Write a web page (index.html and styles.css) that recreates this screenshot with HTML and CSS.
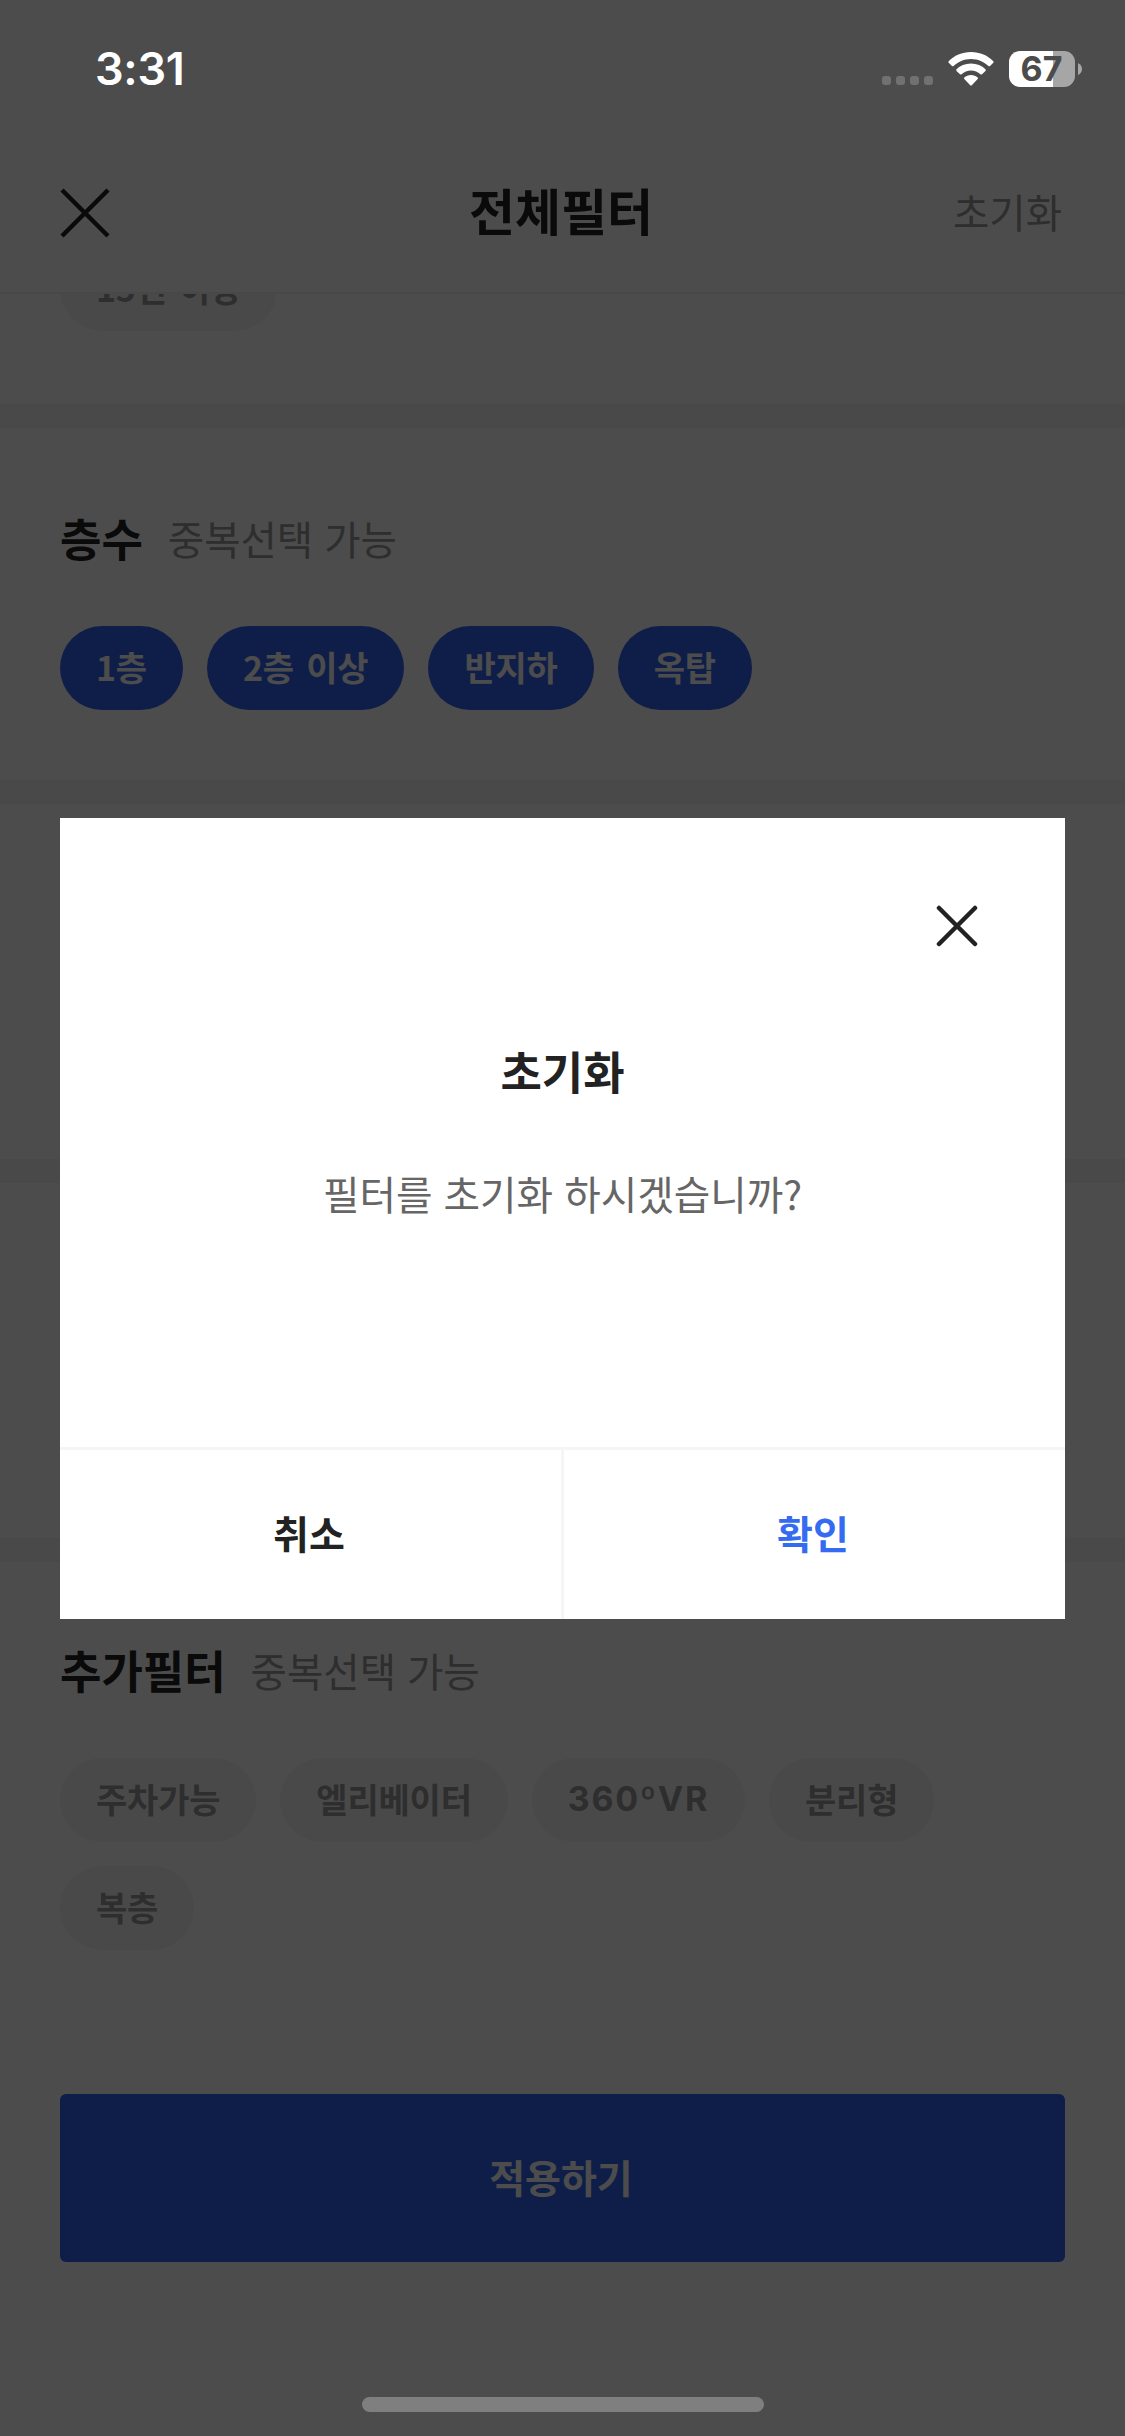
FILE: index.html
```html
<!DOCTYPE html>
<html lang="ko">
<head>
<meta charset="utf-8">
<title>전체필터</title>
<link rel="stylesheet" href="styles.css">
</head>
<body>
<div class="screen">
  <div class="page">
    <header class="header">
      <svg class="header-close" viewBox="0 0 50 50"><path d="M2 2L48 48M48 2L2 48"/></svg>
      <h1 class="header-title">전체필터</h1>
      <span class="header-reset">초기화</span>
    </header>
    <main class="sections">
      <section class="section section-age">
        <div class="chips"><span class="chip">15년 이상</span></div>
      </section>
      <section class="section section-floor">
        <h2 class="section-title">층수 <small class="hint">중복선택 가능</small></h2>
        <div class="chips">
          <span class="chip chip-on">1층</span>
          <span class="chip chip-on">2층 이상</span>
          <span class="chip chip-on">반지하</span>
          <span class="chip chip-on">옥탑</span>
        </div>
      </section>
      <section class="section section-covered"></section>
      <section class="section section-covered"></section>
      <section class="section section-extra">
        <h2 class="section-title">추가필터 <small class="hint">중복선택 가능</small></h2>
        <div class="chips">
          <span class="chip">주차가능</span>
          <span class="chip">엘리베이터</span>
          <span class="chip chip-latin">360ºVR</span>
          <span class="chip">분리형</span>
          <span class="chip">복층</span>
        </div>
      </section>
    </main>
    <button class="apply">적용하기</button>
  </div>

  <div class="overlay">
    <div class="dialog">
      <div class="dialog-body">
        <svg class="dialog-close" viewBox="0 0 42 42"><path d="M3 3L39 39M39 3L3 39"/></svg>
        <h3 class="dialog-title">초기화</h3>
        <p class="dialog-text">필터를 초기화 하시겠습니까?</p>
      </div>
      <div class="dialog-actions">
        <button class="action">취소</button>
        <button class="action action-confirm">확인</button>
      </div>
    </div>
  </div>

  <div class="statusbar">
    <span class="time">3:31</span>
    <div class="status-icons">
      <span class="signal"><i></i><i></i><i></i><i></i></span>
      <svg class="wifi" viewBox="0 0 46 34">
        <path d="M23 0C32 0 40 3.600 45.300 9.200Q46 10 45.300 10.800L42 14Q41.200 14.700 40.400 14C36 9.800 30 7 23 7S10 9.800 5.600 14Q4.800 14.700 4 14L.7 10.800Q0 10 .7 9.200C6 3.600 14 0 23 0Z"/>
        <path d="M23 11.500C28.800 11.500 33.800 13.700 37.500 17.300Q38.200 18.100 37.500 18.900L34 22.200Q33.200 22.900 32.400 22.200C29.900 19.900 26.600 18.500 23 18.500S16.100 19.900 13.600 22.200Q12.800 22.900 12 22.200L8.500 18.900Q7.800 18.100 8.500 17.300C12.200 13.700 17.200 11.500 23 11.500Z"/>
        <path d="M23 23C25.600 23 28 24 29.700 25.500Q30.500 26.300 29.700 27.100L23.800 33.200Q23 34 22.200 33.200L16.300 27.100Q15.500 26.300 16.300 25.500C18 24 20.400 23 23 23Z"/>
      </svg>
      <span class="battery"><b class="battery-level">67</b></span>
      <svg class="battery-nub" viewBox="0 0 4 12"><path d="M0 0Q4 2 4 6T0 12Z"/></svg>
    </div>
  </div>
  <div class="home-indicator"></div>
</div>
</body>
</html>
```
FILE: styles.css
```css
* { box-sizing: border-box; margin: 0; padding: 0; }

body {
  width: 1125px;
  height: 2436px;
  overflow: hidden;
  font-family: "Noto Sans CJK KR", sans-serif;
  color: #222;
}

button { border: 0; background: none; font: inherit; color: inherit; }

.screen { position: relative; width: 1125px; height: 2436px; overflow: hidden; }

.page {
  display: flex;
  flex-direction: column;
  height: 2436px;
  background: #fff;
}

.header {
  flex: none;
  display: grid;
  grid-template-columns: 200px 1fr 200px;
  align-items: center;
  height: 294px;
  padding: 133px 63px 0 60px;
  border-bottom: 2px solid #f0f0f0;
}

.header-close { width: 50px; height: 50px; fill: none; stroke: #222; stroke-width: 4.500; }
.header-title { padding-bottom: 7px; font-size: 50px; line-height: 60px; font-weight: 700; text-align: center; }
.header-reset { padding-bottom: 4px; font-size: 39.500px; line-height: 60px; text-align: right; color: #999; }

.sections { flex: none; height: 1800px; overflow: hidden; }

.section { display: flow-root; padding: 0 60px; border-bottom: 24px solid #f5f5f5; }
.section-age { height: 134px; }
.section-age .chips { margin-top: -47px; }
.section-floor { height: 376px; padding-top: 80px; }
.section-covered { height: 379px; }
.section-extra { padding-top: 78px; border: 0; }

.section-title {
  display: flex;
  align-items: center;
  gap: 25px;
  height: 60px;
  font-size: 45px;
  line-height: 60px;
  font-weight: 700;
}

.hint { font-size: 39.500px; font-weight: 400; color: #999; }

.chips { display: flex; flex-wrap: wrap; gap: 24px; margin-top: 58px; }

.chip {
  height: 84px;
  padding: 0 36px;
  border-radius: 42px;
  background: #f5f5f5;
  font-size: 34px;
  line-height: 82px;
  font-weight: 700;
  letter-spacing: -0.200px;
  word-spacing: 3px;
  color: #999;
  white-space: nowrap;
}

.chip-on { background: #3566f0; color: #fff; }
.chip-latin { font-family: Inter, sans-serif; letter-spacing: 1.700px; }

.apply {
  flex: none;
  width: 1005px;
  height: 168px;
  margin: 0 60px;
  padding-right: 3px;
  border-radius: 6px;
  background: #3566f0;
  color: #fff;
  font-size: 39px;
  line-height: 60px;
  padding-bottom: 5px;
  font-weight: 700;
}

.overlay {
  position: absolute;
  inset: 0;
  display: flex;
  align-items: center;
  justify-content: center;
  background: rgba(0, 0, 0, 0.7);
}

.dialog {
  display: flex;
  flex-direction: column;
  width: 1005px;
  height: 801px;
  background: #fff;
}

.dialog-body {
  display: flex;
  flex-direction: column;
  align-items: center;
  height: 629px;
  padding: 87px 87px 0;
}

.dialog-close {
  align-self: flex-end;
  width: 42px;
  height: 42px;
  fill: none;
  stroke: #222;
  stroke-width: 4.500;
  stroke-linecap: round;
}

.dialog-title { margin-top: 94px; font-size: 45px; line-height: 60px; font-weight: 700; }
.dialog-text { margin-top: 62px; font-size: 39.700px; line-height: 60px; color: #666; }

.dialog-actions {
  flex: 1;
  display: grid;
  grid-template-columns: 504px 501px;
  border-top: 3px solid #f5f5f5;
}

.action { padding: 0 3px 5px 0; font-size: 39px; line-height: 60px; font-weight: 700; }
.action:first-child { border-right: 3px solid #f5f5f5; }
.action-confirm { color: #356bf0; }

.statusbar {
  position: absolute;
  inset: 0 0 auto 0;
  display: flex;
  justify-content: space-between;
  align-items: center;
  height: 138px;
  padding: 0 43px 0 95px;
  color: #fff;
}

.time { font: 600 45px/60px Inter, sans-serif; letter-spacing: -0.300px; }
.status-icons { display: flex; align-items: center; }
.signal { display: flex; gap: 5px; margin-top: 23px; }
.signal i { width: 9px; height: 9px; border-radius: 3px; background: #717171; }
.wifi { width: 46px; height: 34px; margin: 0 15px; fill: #fff; }

.battery {
  width: 66px;
  height: 36px;
  border-radius: 11px;
  background: linear-gradient(90deg, #fff 44px, #a6a6a6 44px);
  text-align: center;
}

.battery-level { display: block; padding-right: 1px; font: 700 34px/36px Inter, sans-serif; color: #4c4c4c; }
.battery-nub { width: 4px; height: 12px; margin-left: 3px; fill: #a6a6a6; }

.home-indicator {
  position: absolute;
  left: 362px;
  bottom: 24px;
  width: 402px;
  height: 15px;
  border-radius: 8px;
  background: #7f7f7f;
}
```
